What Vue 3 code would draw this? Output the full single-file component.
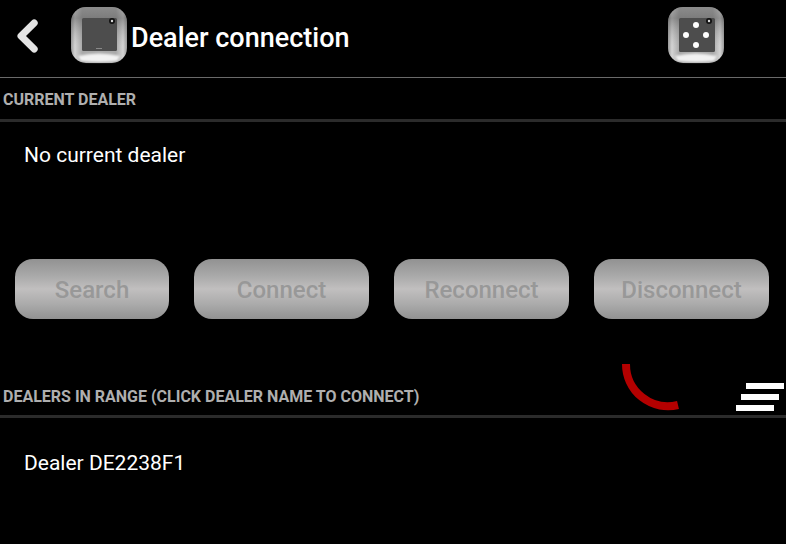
<script setup>
const buttons = ['Search', 'Connect', 'Reconnect', 'Disconnect']
</script>

<template>
  <div class="screen">
    <header class="top">
      <svg class="back" width="24" height="36" viewBox="0 0 24 36">
        <path d="M18.2 4 L5 17 L18.2 30" fill="none" stroke="#e4e4e4" stroke-width="7" stroke-linecap="round" stroke-linejoin="round" />
      </svg>
      <svg class="device" width="58" height="58" viewBox="0 0 58 58">
        <defs>
          <linearGradient id="side" x1="0" y1="0" x2="1" y2="0">
            <stop offset="0" stop-color="#9a9a9a" />
            <stop offset="0.07" stop-color="#d4d4d4" />
            <stop offset="0.2" stop-color="#a9a9a9" />
            <stop offset="0.8" stop-color="#a9a9a9" />
            <stop offset="0.93" stop-color="#d4d4d4" />
            <stop offset="1" stop-color="#9a9a9a" />
          </linearGradient>
          <linearGradient id="shade" x1="0" y1="0" x2="0" y2="1">
            <stop offset="0" stop-color="#555" stop-opacity="0.35" />
            <stop offset="0.2" stop-color="#444" stop-opacity="0.45" />
            <stop offset="0.7" stop-color="#999" stop-opacity="0" />
          </linearGradient>
          <filter id="soft" x="-20%" y="-20%" width="140%" height="140%">
            <feGaussianBlur stdDeviation="0.8" />
          </filter>
        </defs>
        <rect x="1" y="1" width="56" height="56" rx="15" fill="url(#side)" />
        <rect x="1" y="1" width="56" height="56" rx="15" fill="url(#shade)" />
        <path d="M8 50 Q29 45 50 50 L47 55 Q29 57 11 55Z" fill="#f2f2f2" filter="url(#soft)" />
        <rect x="12" y="12" width="35" height="33" rx="1.5" fill="#4d4d4d" />
        <rect x="26" y="42" width="6" height="1" fill="#8a8a8a" />
        <circle cx="42" cy="15" r="3" fill="#111" />
        <circle cx="42" cy="15" r="1.2" fill="#ddd" />
      </svg>
      <h1 class="title">Dealer connection</h1>
      <svg class="device dice" width="58" height="58" viewBox="0 0 58 58">
        <defs>
          <linearGradient id="side2" x1="0" y1="0" x2="1" y2="0">
            <stop offset="0" stop-color="#9a9a9a" />
            <stop offset="0.07" stop-color="#d4d4d4" />
            <stop offset="0.2" stop-color="#a9a9a9" />
            <stop offset="0.8" stop-color="#a9a9a9" />
            <stop offset="0.93" stop-color="#d4d4d4" />
            <stop offset="1" stop-color="#9a9a9a" />
          </linearGradient>
          <linearGradient id="shade2" x1="0" y1="0" x2="0" y2="1">
            <stop offset="0" stop-color="#555" stop-opacity="0.35" />
            <stop offset="0.2" stop-color="#444" stop-opacity="0.45" />
            <stop offset="0.7" stop-color="#999" stop-opacity="0" />
          </linearGradient>
          <filter id="soft2" x="-20%" y="-20%" width="140%" height="140%">
            <feGaussianBlur stdDeviation="0.8" />
          </filter>
        </defs>
        <rect x="1" y="1" width="56" height="56" rx="15" fill="url(#side2)" />
        <rect x="1" y="1" width="56" height="56" rx="15" fill="url(#shade2)" />
        <path d="M8 50 Q29 45 50 50 L47 55 Q29 57 11 55Z" fill="#f2f2f2" filter="url(#soft2)" />
        <rect x="12" y="12" width="36" height="34" rx="1.5" fill="#4d4d4d" />
        <circle cx="42" cy="15" r="3" fill="#111" />
        <circle cx="42" cy="15" r="1.2" fill="#ddd" />
        <circle cx="29" cy="19" r="3" fill="#fff" />
        <circle cx="19" cy="29" r="3" fill="#fff" />
        <circle cx="39" cy="29" r="3" fill="#fff" />
        <circle cx="29" cy="39" r="3" fill="#fff" />
      </svg>
    </header>

    <section class="head first"><span>CURRENT DEALER</span></section>
    <p class="row row-a">No current dealer</p>

    <div class="buttons">
      <button v-for="b in buttons" :key="b" class="btn" type="button">{{ b }}</button>
    </div>

    <section class="head second">
      <span>DEALERS IN RANGE (CLICK DEALER NAME TO CONNECT)</span>
      <svg class="spinner" width="70" height="56" viewBox="0 0 70 56">
        <path d="M6 4 A42 42 0 0 0 58 45" fill="none" stroke="#b40000" stroke-width="8" />
      </svg>
      <div class="menu"><i></i><i></i><i></i></div>
    </section>
    <p class="row row-b">Dealer DE2238F1</p>
  </div>
</template>

<style>
html, body { margin: 0; background: #000; }
</style>

<style scoped>
.screen {
  position: relative;
  width: 786px;
  height: 544px;
  overflow: hidden;
  background: #000;
  color: #fff;
  font-family: Roboto, "Liberation Sans", sans-serif;
}
.top {
  display: flex;
  align-items: center;
  height: 77px;
  border-bottom: 1px solid #6a6a6a;
  padding-left: 16px;
}
.back { flex: none; margin-top: -4px; }
.device { flex: none; margin-left: 30px; margin-top: -7px; }
.title {
  margin: 0 0 2px 3px;
  width: 536px;
  font-size: 27px;
  font-weight: 500;
  color: #fff;
  white-space: nowrap;
}
.dice { margin-left: 0; }
.head {
  position: relative;
  display: flex;
  align-items: center;
  box-sizing: border-box;
  padding-left: 3px;
  border-bottom: 3px solid #2b2b2b;
  font-size: 16px;
  font-weight: 700;
  color: #afafaf;
}
.first { height: 44px; padding-top: 2px; }
.second { height: 60px; margin-top: 39px; padding-top: 19px; }
.row {
  margin: 0;
  padding-left: 24px;
  font-size: 21px;
  line-height: 26px;
  color: #fff;
}
.row-a { padding-top: 20px; }
.row-b { padding-top: 32px; }
.buttons {
  display: flex;
  gap: 25px;
  margin-top: 91px;
  padding-left: 15px;
}
.btn {
  flex: none;
  width: 175px;
  height: 60px;
  border: 0;
  border-radius: 18px;
  padding: 2px 0 0;
  background: linear-gradient(#929292 0%, #a9a9a9 28%, #c1bfbf 50%, #ababab 75%, #929292 100%);
  color: #989898;
  font: 500 24px Roboto, "Liberation Sans", sans-serif;
}
.btn:first-child { width: 154px; }
.spinner { position: absolute; left: 620px; top: 2px; }
.menu { position: absolute; left: 736px; top: 25px; width: 48px; height: 28px; }
.menu i { position: absolute; height: 6px; width: 38px; background: #fff; }
.menu i:nth-child(1) { left: 10px; top: 0; }
.menu i:nth-child(2) { left: 5px; top: 11px; }
.menu i:nth-child(3) { left: 0; top: 22px; }
</style>
